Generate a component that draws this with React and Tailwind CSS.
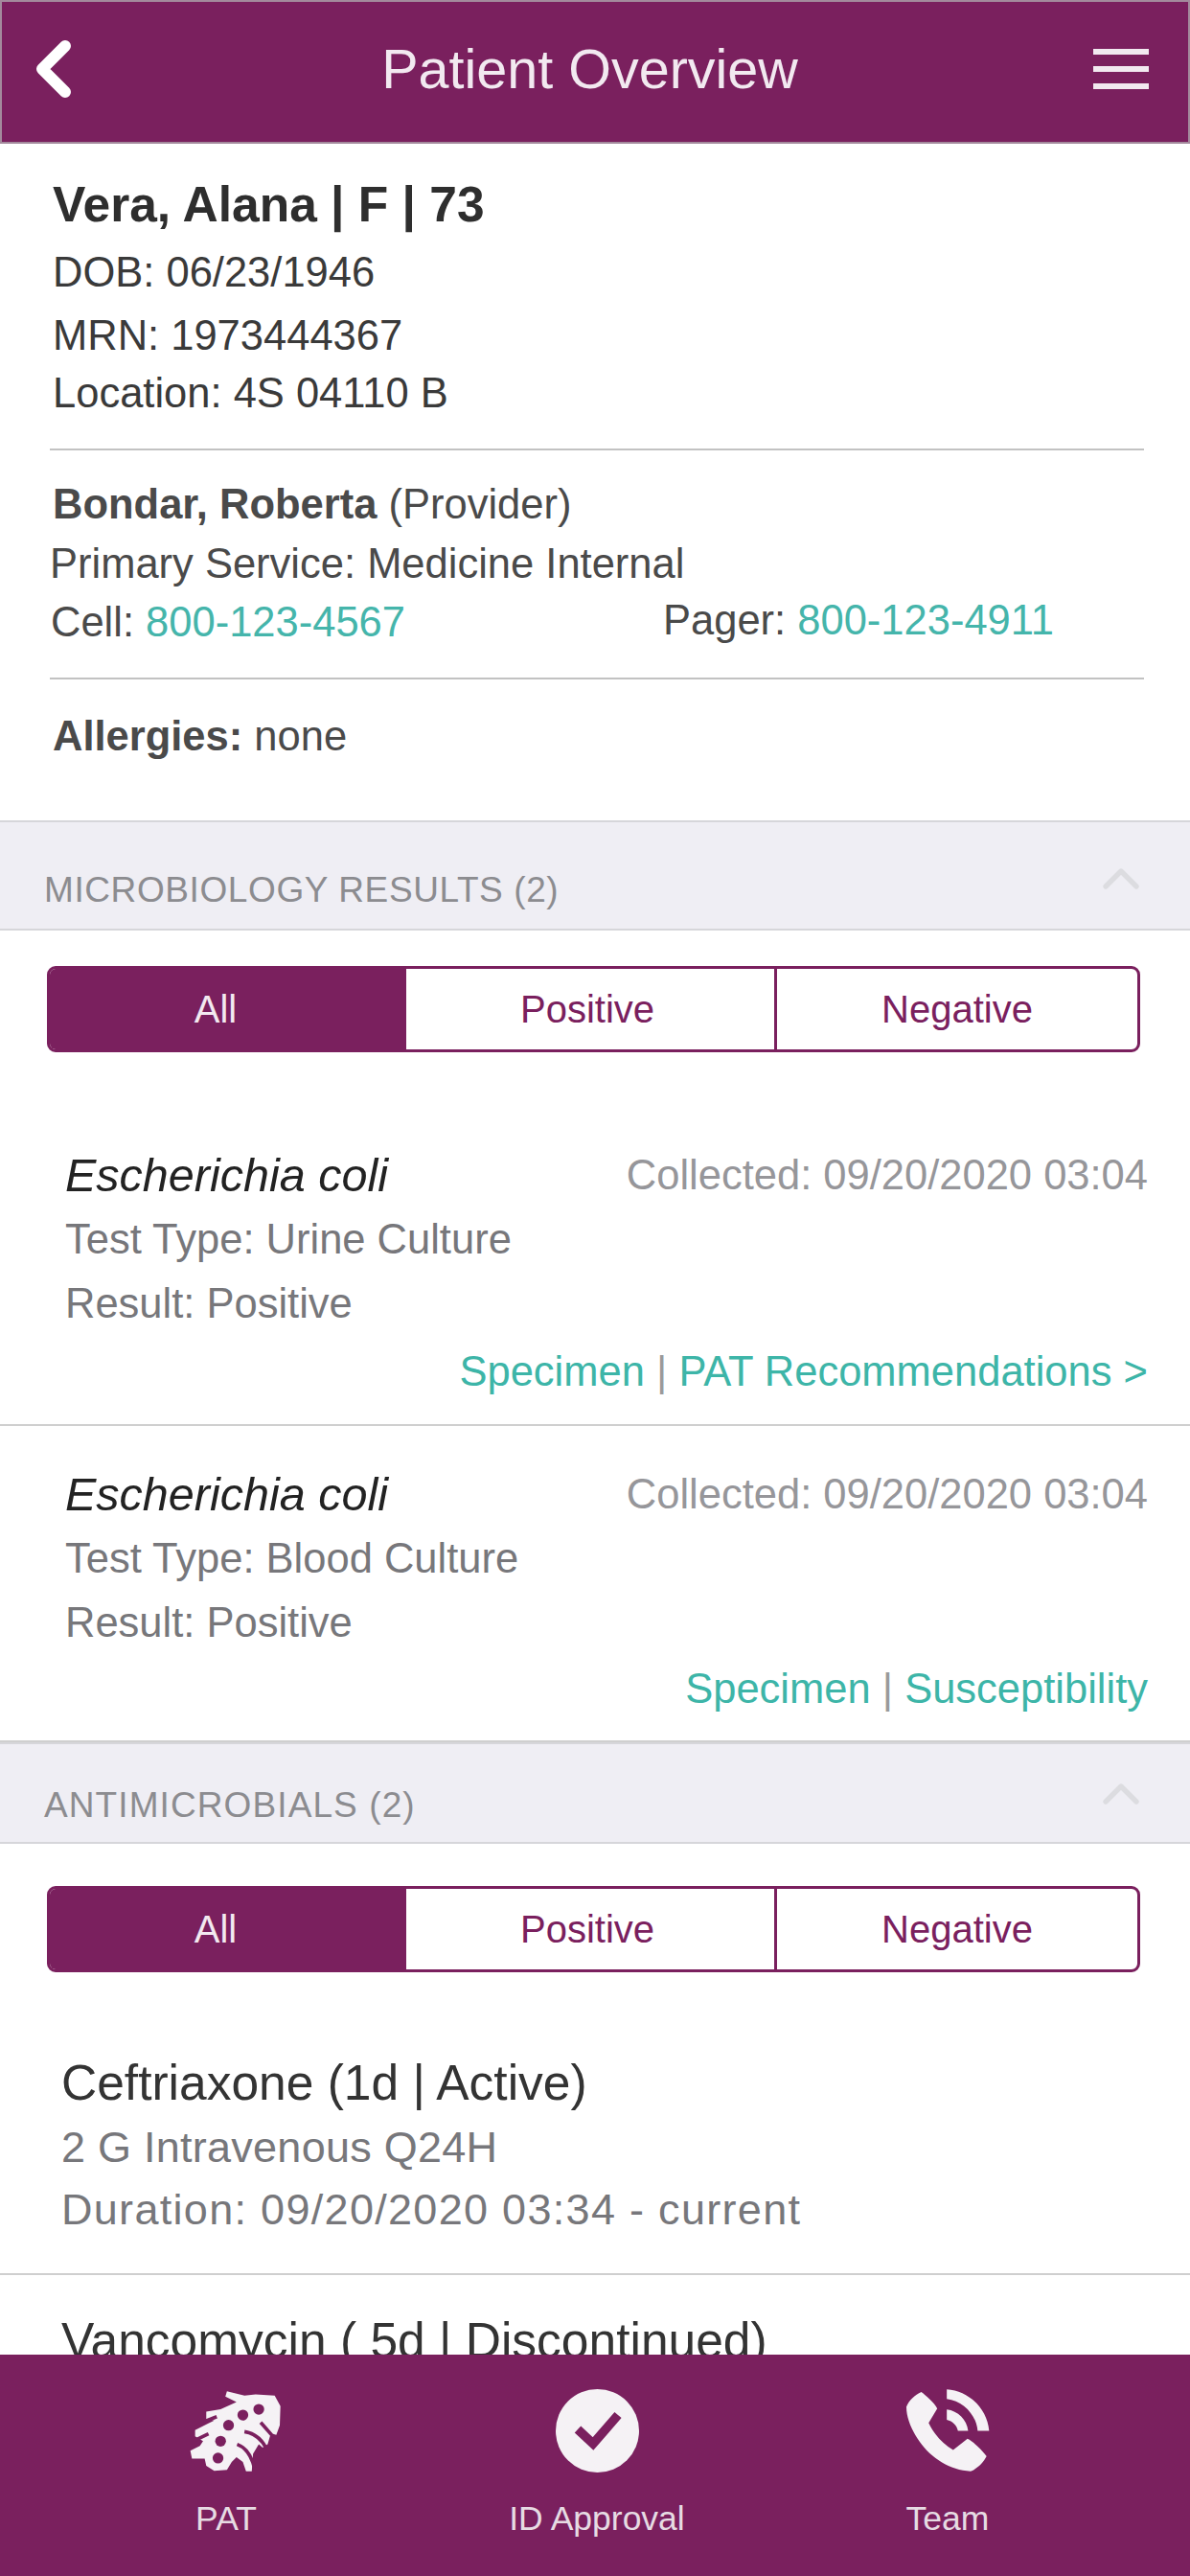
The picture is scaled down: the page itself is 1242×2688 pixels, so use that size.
import React from 'react';
import { ChevronLeft, ChevronUp } from 'lucide-react';

const PURPLE = 'bg-[#7a205e]';

function PatIcon() {
  return (
    <svg viewBox="30 22 295 264" className="ml-[19px] h-[88px] w-[98px]">
      <path
        fill="#f5f2f5"
        d="M150 28 L205 42 L240 38 L300 42 L318 75 L316 135 L305 165 L288 160 L278 195 L262 205 L250 195 L232 225 L228 280 L210 280 L200 250 L180 235 L165 250 L150 275 L110 278 L85 262 L80 240 L40 240 L35 215 L65 200 L75 185 L50 170 L50 150 L90 130 L110 120 L85 115 L85 92 L130 85 L180 62 L145 45 Z"
      />
      <g fill="#7a205e">
        <circle cx="250" cy="85" r="17" />
        <circle cx="200" cy="103" r="17" />
        <circle cx="155" cy="135" r="17" />
        <circle cx="130" cy="185" r="17" />
        <circle cx="122" cy="238" r="17" />
      </g>
      <g fill="none" stroke="#7a205e" strokeWidth="11">
        <path d="M256 126 L290 165" />
        <path d="M205 155 C235 160 258 178 272 205" />
        <path d="M182 195 C210 205 228 235 236 268" />
        <path d="M78 124 L118 108" />
        <path d="M50 182 L92 162" />
      </g>
    </svg>
  );
}

function CheckIcon() {
  return (
    <svg viewBox="0 0 87 87" className="h-[87px] w-[87px]">
      <circle cx="43.5" cy="43.5" r="43.5" fill="#f5f2f5" />
      <path d="M23 42 L39 57 L65 27" fill="none" stroke="#7a205e" strokeWidth="9.5" />
    </svg>
  );
}

function PhoneIcon() {
  return (
    <svg viewBox="35 25 265 260" className="h-[87px] w-[88px]" fill="#f5f2f5">
      <path d="M85 33 C100 45 125 65 135 85 L108 130 C125 165 150 195 185 215 L230 180 C250 190 275 215 290 235 C280 255 260 275 240 282 C175 280 115 240 80 190 C55 155 38 115 38 80 C45 60 65 42 85 33 Z" />
      <path d="M165 25 C235 30 292 85 298 155 L262 155 C258 105 215 60 165 55 Z" />
      <path d="M165 88 C200 92 228 120 232 155 L200 155 C197 138 183 124 165 120 Z" />
    </svg>
  );
}

function Tabs() {
  return (
    <div className="flex h-[90px] overflow-hidden rounded-[9px] border-[3px] border-[#7a205e] text-[40px] text-[#7a205e]">
      <div className={`flex w-[372px] items-center justify-center ${PURPLE} pr-[26px] text-[#f3e9f0]`}>All</div>
      <div className="flex w-[387px] items-center justify-center border-r-[3px] border-[#7a205e] pr-[6px]">Positive</div>
      <div className="flex flex-1 items-center justify-center">Negative</div>
    </div>
  );
}

function SectionBand({ title, className, titleClass }) {
  return (
    <div className={`flex items-start justify-between border-y-2 border-[#d6d6da] bg-[#efeef4] pl-[46px] pr-[40px] ${className}`}>
      <span className={`text-[37px] leading-[42px] text-[#8c8c90] ${titleClass}`}>{title}</span>
      <ChevronUp className="-mt-[23px] h-[64px] w-[64px] text-[#dcdce0]" strokeWidth={2} />
    </div>
  );
}

function Culture({ test, links, className, linksClass }) {
  return (
    <div className={`border-b-2 border-[#cfcfcf] pl-[68px] pr-[44px] ${className}`}>
      <div className="flex items-center justify-between leading-[50px]">
        <span className="text-[48.5px] italic text-[#222222]">Escherichia coli</span>
        <span className="text-[43.5px] text-[#96969a]">Collected: 09/20/2020 03:04</span>
      </div>
      <div className="mt-[17px] text-[43.5px] leading-[50px] text-[#77777b]">Test Type: {test}</div>
      <div className="mt-[17px] text-[43.5px] leading-[50px] text-[#77777b]">Result: Positive</div>
      <div className={`text-right text-[43.5px] leading-[50px] text-[#3db5a8] ${linksClass}`}>{links}</div>
    </div>
  );
}

function Nav({ icon, label, className }) {
  return (
    <div className={`flex flex-col items-center ${className}`}>
      <div className="flex h-[87px] items-center justify-center">{icon}</div>
      <div className="mt-[27px] text-[35.5px] leading-[42px] text-[#e6dbe3]">{label}</div>
    </div>
  );
}

export default function App() {
  return (
    <div className="flex h-[2688px] w-[1242px] flex-col overflow-hidden bg-white font-['Liberation_Sans',Arial,sans-serif]">
      <header className={`flex h-[150px] shrink-0 items-center justify-between border-2 border-[#a38a9c] ${PURPLE} pb-[6px] pl-[6px] pr-[41px]`}>
        <ChevronLeft className="h-[96px] w-[96px] text-white" strokeWidth={3} />
        <h1 className="mr-[14px] text-[57.5px] text-[#f2e9f0]">Patient Overview</h1>
        <div className="flex w-[58px] flex-col gap-[12px]">
          <div className="h-[6px] bg-[#f2e9f0]" />
          <div className="h-[6px] bg-[#f2e9f0]" />
          <div className="h-[6px] bg-[#f2e9f0]" />
        </div>
      </header>

      <main className="min-h-0 flex-1 overflow-hidden">
        <section className="h-[706px] pl-[52px] pr-[48px] pt-[33px]">
          <div className="ml-[3px] text-[51.5px] font-bold leading-[60px] text-[#2e2e2e]">Vera, Alana | F | 73</div>
          <div className="ml-[3px] mt-[16px] text-[43.5px] leading-[50px] text-[#3a3a3a]">DOB: 06/23/1946</div>
          <div className="ml-[3px] mt-[16px] text-[43.5px] leading-[50px] text-[#3a3a3a]">MRN: 1973444367</div>
          <div className="ml-[3px] mt-[10px] text-[43.5px] leading-[50px] text-[#3a3a3a]">Location: 4S 04110 B</div>
          <div className="mt-[33px] h-[2px] bg-[#c2c2c2]" />
          <div className="ml-[3px] mt-[31px] text-[43.5px] leading-[50px] text-[#4a4a4a]"><b>Bondar, Roberta</b> (Provider)</div>
          <div className="mt-[12px] text-[43.5px] leading-[50px] text-[#4a4a4a]">Primary Service: Medicine Internal</div>
          <div className="mt-[11px] flex text-[43.5px] leading-[50px] text-[#4a4a4a]">
            <div className="ml-[1px] w-[639px]">Cell: <span className="text-[#45b5ab]">800-123-4567</span></div>
            <div className="-mt-[2px]">Pager: <span className="text-[#45b5ab]">800-123-4911</span></div>
          </div>
          <div className="mt-[33px] h-[2px] bg-[#c2c2c2]" />
          <div className="ml-[3px] mt-[34px] text-[43.5px] leading-[50px] text-[#4a4a4a]"><b>Allergies:</b> none</div>
        </section>

        <SectionBand title="MICROBIOLOGY RESULTS (2)" className="h-[115px] pt-[50px]" titleClass="tracking-[0.6px]" />
        <div className="pl-[49px] pr-[52px] pt-[37px]"><Tabs /></div>
        <Culture
          test="Urine Culture"
          className="h-[390px] pt-[103px]"
          linksClass="mt-[21px]"
          links={<>Specimen <span className="text-[#9a9a9a]">|</span> PAT Recommendations &gt;</>}
        />
        <Culture
          test="Blood Culture"
          className="h-[330px] border-b-0 pt-[46px]"
          linksClass="mt-[19px]"
          links={<>Specimen <span className="text-[#9a9a9a]">|</span> Susceptibility</>}
        />
        <SectionBand title="ANTIMICROBIALS (2)" className="h-[106px] pt-[43px]" titleClass="tracking-[1.1px]" />
        <div className="pl-[49px] pr-[52px] pt-[44px]"><Tabs /></div>

        <div className="h-[316px] border-b-2 border-[#cfcfcf] pl-[64px] pt-[90px]">
          <div className="text-[51.5px] leading-[50px] text-[#333333]">Ceftriaxone (1d | Active)</div>
          <div className="mt-[18px] text-[45px] leading-[50px] tracking-[0.25px] text-[#77777b]">2 G Intravenous Q24H</div>
          <div className="mt-[15px] text-[45px] leading-[50px] tracking-[1.3px] text-[#77777b]">Duration: 09/20/2020 03:34 - current</div>
        </div>
        <div className="pl-[64px] pt-[43px] text-[51.5px] leading-[50px] text-[#333333]">Vancomycin ( 5d | Discontinued)</div>
      </main>

      <footer className={`relative flex h-[231px] shrink-0 ${PURPLE} pt-[36px]`}>
        <Nav icon={<PatIcon />} label="PAT" className="ml-[136px] w-[200px]" />
        <Nav icon={<CheckIcon />} label="ID Approval" className="ml-[187px] w-[200px]" />
        <Nav icon={<PhoneIcon />} label="Team" className="ml-[166px] w-[200px]" />
      </footer>
    </div>
  );
}
